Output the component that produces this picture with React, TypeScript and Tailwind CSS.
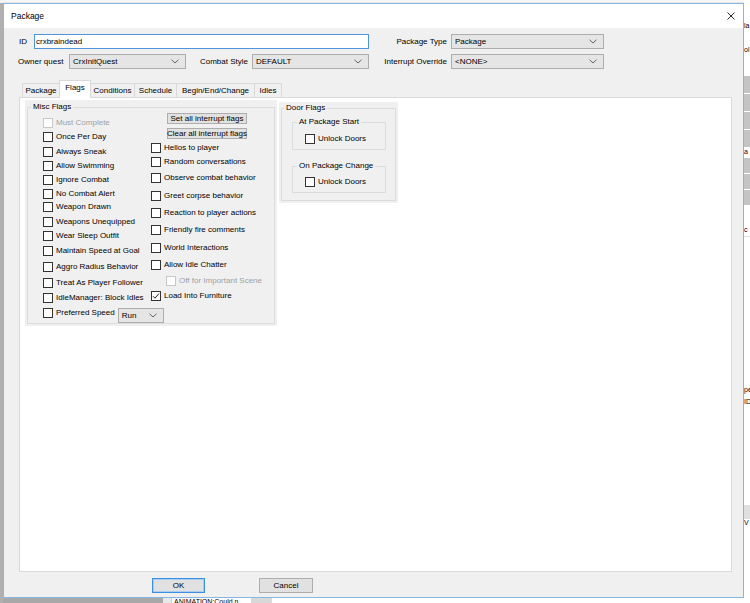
import React from "react";

function Chevron() {
  return (
    <svg width="8" height="5" viewBox="0 0 8 5" className="shrink-0">
      <path d="M0.5 0.8 L4 4 L7.5 0.8" fill="none" stroke="#555" strokeWidth="0.9" />
    </svg>
  );
}

function Combo({ text, className }: { text: string; className: string }) {
  return (
    <div
      className={`shrink-0 flex items-center justify-between h-[15px] border border-[#adadad] bg-[#e5e5e5] pl-[3px] pr-[6px] ${className}`}
    >
      <span>{text}</span>
      <Chevron />
    </div>
  );
}

function Box({ checked, disabled }: { checked?: boolean; disabled?: boolean }) {
  return (
    <span
      className={
        disabled
          ? "w-[10px] h-[10px] shrink-0 border border-[#c8c8c8] bg-white"
          : "w-[10px] h-[10px] shrink-0 border border-[#333333] bg-white flex items-center justify-center"
      }
    >
      {checked ? (
        <svg width="8" height="8" viewBox="0 0 8 8">
          <path d="M1 4.2 L3 6.2 L7 1.5" fill="none" stroke="#222" strokeWidth="1" />
        </svg>
      ) : null}
    </span>
  );
}

function Check({
  label,
  checked,
  disabled,
  className,
}: {
  label: string;
  checked?: boolean;
  disabled?: boolean;
  className: string;
}) {
  return (
    <div className={`shrink-0 flex items-center h-[12px] gap-[3px] ${className}`}>
      <Box checked={checked} disabled={disabled} />
      <span className={disabled ? "text-[#a0a0a0] whitespace-nowrap" : "whitespace-nowrap"}>{label}</span>
    </div>
  );
}

function Tab({ label, selected, className }: { label: string; selected?: boolean; className: string }) {
  return (
    <div
      className={
        selected
          ? `relative z-10 -mb-px h-[18px] flex items-start justify-center pt-[2px] bg-white border border-b-0 border-[#d9d9d9] ${className}`
          : `h-[14px] flex items-center justify-center bg-[#f0f0f0] border border-b-0 border-[#d9d9d9] ${className}`
      }
    >
      {label}
    </div>
  );
}

export default function App() {
  return (
    <div className="w-[750px] h-[603px] overflow-hidden flex flex-row bg-white font-['Liberation_Sans',Arial,sans-serif] text-[8px] leading-[10px] text-black">
      {/* left outside strip */}
      <div className="w-[3px] h-full flex flex-col">
        <div className="h-[3px] bg-[#f4f4f4]" />
        <div className="flex-1 bg-[#b0b0b0]" />
      </div>

      {/* middle column */}
      <div className="w-[741px] h-full flex flex-col">
        <div className="h-[3px] bg-[#f7f7f7] border-b border-[#e6e6e6]" />

        {/* Dialog */}
        <div className="w-[741px] h-[595px] border border-[#86b6e4] bg-[#f0f0f0] flex flex-col">
          {/* Title bar */}
          <div className="h-[24px] bg-white flex items-center justify-between pl-[7px] pr-[8px]">
            <span className="text-[8.5px]">Package</span>
            <svg width="8" height="8" viewBox="0 0 8 8">
              <path d="M0.5 0.5 L7.5 7.5 M7.5 0.5 L0.5 7.5" stroke="#111" strokeWidth="0.9" />
            </svg>
          </div>

          {/* Body */}
          <div className="flex-1 flex flex-col">
            {/* Row 1 */}
            <div className="mt-[6px] h-[15px] flex items-center pl-[15px]">
              <span className="w-[15px]">ID</span>
              <div className="w-[335px] h-[15px] border border-[#4f95db] bg-white flex items-center pl-[1px]">
                crxbraindead
              </div>
              <span className="w-[82px] text-right pr-[4px]">Package Type</span>
              <Combo text="Package" className="w-[153px]" />
            </div>

            {/* Row 2 */}
            <div className="mt-[5px] h-[15px] flex items-center pl-[14px]">
              <span className="w-[51px] whitespace-nowrap">Owner quest</span>
              <Combo text="CrxInitQuest" className="w-[117px]" />
              <span className="w-[66px] text-right pr-[4px] whitespace-nowrap">Combat Style</span>
              <Combo text="DEFAULT" className="w-[117px]" />
              <span className="w-[82px] text-right pr-[4px] whitespace-nowrap">Interrupt Override</span>
              <Combo text="<NONE>" className="w-[153px]" />
            </div>

            {/* Tab control */}
            <div className="mt-[11px] ml-[15px] w-[713px] flex flex-col">
              <div className="h-[17px] flex items-end pl-[3px]">
                <Tab label="Package" className="w-[38px]" />
                <Tab label="Flags" selected className="w-[32px] -ml-px" />
                <Tab label="Conditions" className="w-[45px] -ml-px" />
                <Tab label="Schedule" className="w-[43px] -ml-px" />
                <Tab label="Begin/End/Change" className="w-[79px] -ml-px" />
                <Tab label="Idles" className="w-[28px] -ml-px" />
              </div>

              <div className="h-[475px] border border-[#d9d9d9] bg-white flex items-start pl-[5px]">
                {/* Misc Flags */}
                <div className="mt-[2px] w-[252px] h-[226px] bg-[#f0f0f0] px-[2px] pt-[2px] pb-[2px]">
                  <fieldset className="h-full border border-[#dcdcdc]">
                    <legend className="ml-[3px] px-[2px] leading-[10px]">Misc Flags</legend>
                    <div className="flex flex-row">
                      <div className="w-[123px] shrink-0 pl-[15px] flex flex-col">
                        <Check label="Must Complete" disabled className="mt-[5px]" />
                        <Check label="Once Per Day" className="mt-[2px]" />
                        <Check label="Always Sneak" className="mt-[3px]" />
                        <Check label="Allow Swimming" className="mt-[2px]" />
                        <Check label="Ignore Combat" className="mt-[2px]" />
                        <Check label="No Combat Alert" className="mt-[2px]" />
                        <Check label="Weapon Drawn" className="mt-[1px]" />
                        <Check label="Weapons Unequipped" className="mt-[3px]" />
                        <Check label="Wear Sleep Outfit" className="mt-[2px]" />
                        <Check label="Maintain Speed at Goal" className="mt-[3px]" />
                        <Check label="Aggro Radius Behavior" className="mt-[4px]" />
                        <Check label="Treat As Player Follower" className="mt-[4px]" />
                        <Check label="IdleManager: Block Idles" className="mt-[3px]" />
                        <div className="mt-[3px] h-[16px] flex items-start">
                          <Check label="Preferred Speed" className="mt-[0px]" />
                          <Combo text="Run" className="ml-[3px] mt-[1px] w-[46px]" />
                        </div>
                      </div>
                      <div className="flex flex-col">
                        <div className="mt-[1px] ml-[16px] w-[80px] h-[11px] border border-[#adadad] bg-[#e1e1e1] flex items-center justify-center whitespace-nowrap">
                          Set all interrupt flags
                        </div>
                        <div className="mt-[4px] ml-[16px] w-[80px] h-[11px] border border-[#adadad] bg-[#e1e1e1] flex items-center justify-center whitespace-nowrap">
                          Clear all interrupt flags
                        </div>
                        <Check label="Hellos to player" className="mt-[3px]" />
                        <Check label="Random conversations" className="mt-[2px]" />
                        <Check label="Observe combat behavior" className="mt-[4px]" />
                        <Check label="Greet corpse behavior" className="mt-[6px]" />
                        <Check label="Reaction to player actions" className="mt-[5px]" />
                        <Check label="Friendly fire comments" className="mt-[5px]" />
                        <Check label="World Interactions" className="mt-[6px]" />
                        <Check label="Allow Idle Chatter" className="mt-[5px]" />
                        <Check label="Off for Important Scene" disabled className="mt-[4px] ml-[15px]" />
                        <Check label="Load Into Furniture" checked className="mt-[3px]" />
                      </div>
                    </div>
                  </fieldset>
                </div>

                {/* Door Flags */}
                <div className="ml-[2px] mt-[4px] w-[119px] h-[101px] bg-[#f0f0f0] px-[2px] pt-[1px] pb-[2px]">
                  <fieldset className="h-full border border-[#dcdcdc]">
                    <legend className="ml-[2px] px-[2px] leading-[10px]">Door Flags</legend>
                    <fieldset className="mt-[4px] ml-[10px] w-[94px] border border-[#dcdcdc] pb-[4px]">
                      <legend className="ml-[4px] px-[2px] leading-[10px]">At Package Start</legend>
                      <Check label="Unlock Doors" className="mt-[6px] ml-[12px]" />
                    </fieldset>
                    <fieldset className="mt-[11px] ml-[10px] w-[94px] border border-[#dcdcdc] pb-[4px]">
                      <legend className="ml-[4px] px-[2px] leading-[10px]">On Package Change</legend>
                      <Check label="Unlock Doors" className="mt-[5px] ml-[12px]" />
                    </fieldset>
                  </fieldset>
                </div>
              </div>
            </div>

            {/* Bottom buttons */}
            <div className="mt-[6px] h-[15px] flex pl-[148px]">
              <div className="w-[53px] h-[15px] border border-[#3b8ee0] shadow-[inset_0_0_0_1px_#a9cdf0] bg-[#e1e1e1] flex items-center justify-center">
                OK
              </div>
              <div className="ml-[54px] w-[54px] h-[15px] border border-[#adadad] bg-[#e1e1e1] flex items-center justify-center">
                Cancel
              </div>
            </div>
          </div>
        </div>

        {/* bottom outside strip */}
        <div className="h-[5px] flex flex-row">
          <div className="w-[160px] bg-[#a8a8a8]" />
          <div className="w-[8px] bg-[#e8e8e8]" />
          <div className="w-[80px] bg-white border-l border-[#cfcfcf] text-[7px] leading-[7px] overflow-hidden whitespace-nowrap pl-[2px]">
            ANIMATION:Could n
          </div>
          <div className="w-[20px] bg-[#d8d8d8]" />
          <div className="flex-1 bg-white border-l border-[#dcdcdc]" />
        </div>
      </div>

      {/* right outside strip */}
      <div className="w-[6px] h-full flex flex-col bg-white text-[7px] leading-[8px] overflow-hidden">
        <div className="h-[22px]" />
        <div className="h-[10px] whitespace-nowrap">la</div>
        <div className="h-[14px]" />
        <div className="h-[10px] whitespace-nowrap">ol</div>
        <div className="h-[20px]" />
        <div className="h-[18px] bg-[#c4c4c4] border-b border-white" />
        <div className="h-[18px] bg-[#c4c4c4] border-b border-white" />
        <div className="h-[18px] bg-[#c4c4c4] border-b border-white" />
        <div className="h-[18px] bg-[#c4c4c4] border-b border-white" />
        <div className="h-[10px] whitespace-nowrap">a</div>
        <div className="h-[16px] bg-[#c4c4c4] border-b border-white" />
        <div className="h-[16px] bg-[#c4c4c4] border-b border-white" />
        <div className="h-[16px] bg-[#c4c4c4] border-b border-white" />
        <div className="h-[20px]" />
        <div className="h-[10px] whitespace-nowrap">c</div>
        <div className="h-[150px] border-t border-[#e0e0e0]" />
        <div className="h-[12px] whitespace-nowrap">pe</div>
        <div className="h-[12px] whitespace-nowrap">ID</div>
        <div className="h-[95px]" />
        <div className="h-[14px] bg-[#e0e0e0]" />
        <div className="h-[12px] whitespace-nowrap">V</div>
        <div className="flex-1" />
      </div>
    </div>
  );
}
